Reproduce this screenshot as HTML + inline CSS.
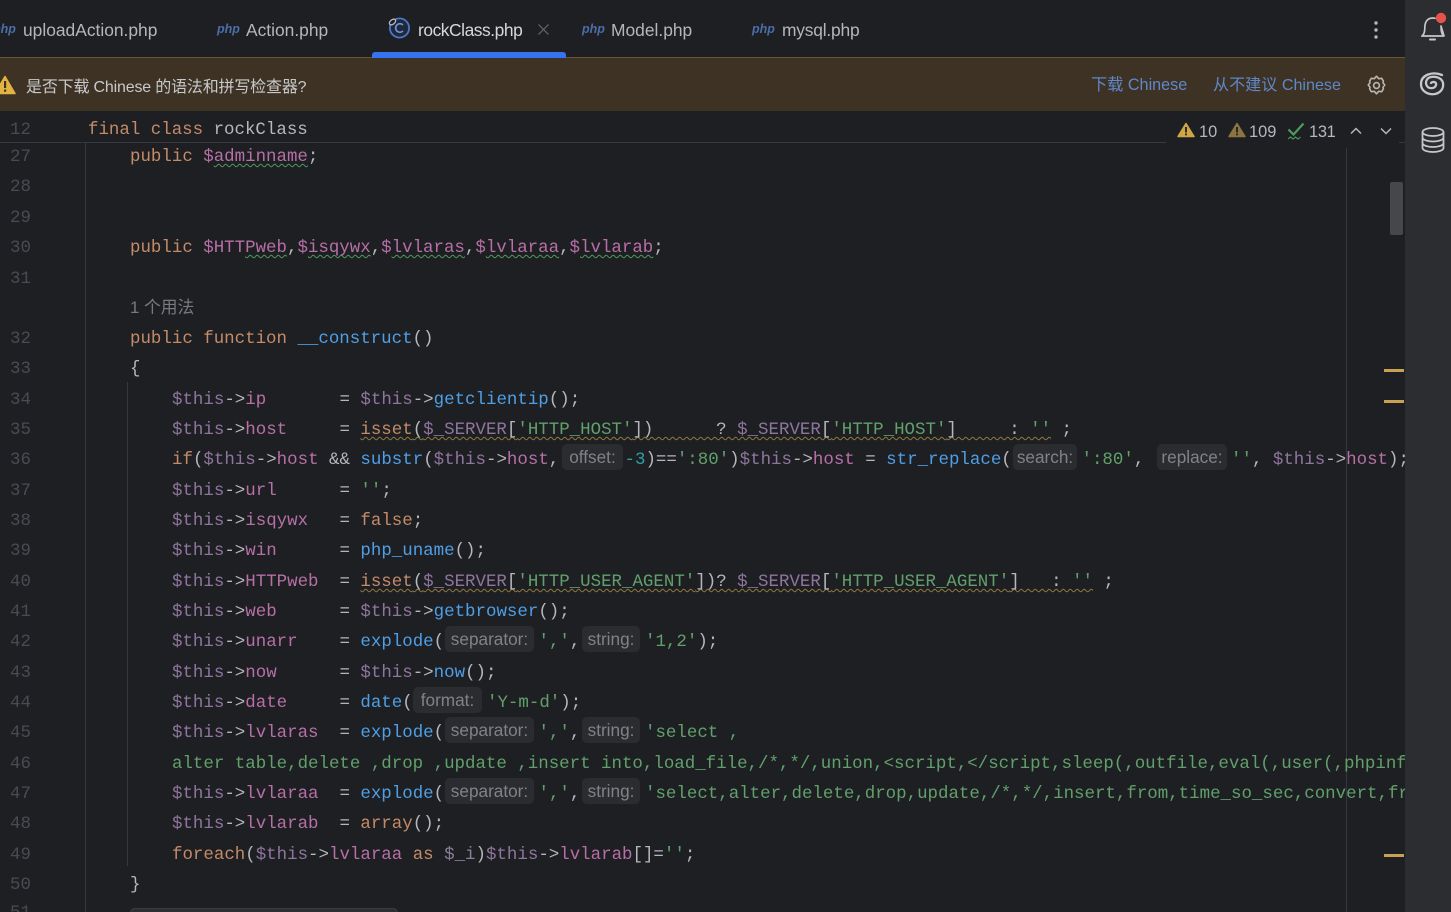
<!DOCTYPE html>
<html><head><meta charset="utf-8"><style>
html,body{margin:0;padding:0;background:#1e1f23}
#root{position:relative;width:1451px;height:912px;overflow:hidden;background:#1e1f23;font-family:"Liberation Sans","Noto Sans CJK SC",sans-serif;filter:blur(.3px)}
.a{position:absolute}
.tab{position:absolute;top:19px;font-size:17.4px;line-height:22px;color:#b4b6bb;white-space:nowrap}
.php{position:absolute;top:22px;font-size:12.5px;line-height:14px;font-style:italic;font-weight:bold;color:#4a6ea8;white-space:nowrap}
#ed{position:absolute;left:0;top:4px;width:1405px;height:908px;overflow:hidden}
.l{position:absolute;left:0;width:1405px;height:30px;line-height:30px;font-family:"Liberation Mono",monospace;font-size:17.45px;white-space:pre;color:#b5b7bd}
.l>span,.l>i{position:absolute;top:0}
.g{left:10px;color:#484b52}
i.h{font-family:"Liberation Sans",sans-serif;font-style:normal;font-size:17.2px;color:#7f8287;background:#2b2c30;border-radius:5px;height:26px;line-height:27px;top:-1px;text-align:center;display:block}
.k{color:#c48b68}.t{color:#8f759e}.v{color:#b76fa6}.f{color:#4f9fe6}.s{color:#61a06b}.n{color:#2a9fa8}.d{color:#8a7f99}
.wg{text-decoration:underline wavy #4f9a5d 1px;text-underline-offset:2px;text-decoration-skip-ink:none}
.wy{text-decoration:underline wavy #8d7a3f 1px;text-underline-offset:2px;text-decoration-skip-ink:none}
b{font-weight:normal}
</style></head><body><div id="root">

<div class="a" style="left:0;top:57px;width:1405px;height:54px;background:#3d3224;border-top:1px solid #66553a;box-sizing:border-box"></div>
<div class="a" style="left:372px;top:52px;width:194px;height:6px;background:#3574f0;border-radius:3px 3px 0 0"></div>

<span class="php" style="left:-7px;">php</span><span class="tab" style="left:23px">uploadAction.php</span>
<span class="php" style="left:217px">php</span><span class="tab" style="left:246px">Action.php</span>
<svg class="a" style="left:388px;top:16px" width="24" height="24" viewBox="0 0 24 24" fill="none"><circle cx="11.5" cy="12" r="9.6" stroke="#4a78c8" stroke-width="1.8" fill="#20283a"/><path d="M15 9a4.300 4.300 0 1 0 0 6" stroke="#6f9be0" stroke-width="1.600"/><ellipse cx="4.500" cy="6" rx="3.600" ry="2.200" transform="rotate(-38 4.500 6)" stroke="#b5b7bd" stroke-width="1.300" fill="#1e1f23"/></svg>
<span class="tab" style="left:418px;color:#d5d7db;letter-spacing:-.45px">rockClass.php</span>
<svg class="a" style="left:537px;top:23px" width="13" height="13" viewBox="0 0 13 13"><path d="M1.500 1.500l10 10M11.500 1.500l-10 10" stroke="#64676d" stroke-width="1.200"/></svg>
<span class="php" style="left:582px">php</span><span class="tab" style="left:611px">Model.php</span>
<span class="php" style="left:752px">php</span><span class="tab" style="left:782px;letter-spacing:-.2px">mysql.php</span>
<svg class="a" style="left:1372px;top:20px" width="8" height="20" viewBox="0 0 8 20" fill="#b5b7bd"><circle cx="4" cy="3" r="1.700"/><circle cx="4" cy="10" r="1.700"/><circle cx="4" cy="17" r="1.700"/></svg>

<svg class="a" style="left:-6px;top:75px" width="22" height="20" viewBox="0 0 22 20"><path d="M11 1.500L21 18.500H1z" fill="#e3b341" stroke="#e3b341" stroke-width="1.500" stroke-linejoin="round"/><rect x="10" y="6" width="2.200" height="7" fill="#3d3224"/><rect x="10" y="14.500" width="2.200" height="2.200" fill="#3d3224"/></svg>
<span class="a" style="left:26px;top:77px;font-size:16px;line-height:21px;color:#c8c9cc;white-space:nowrap;letter-spacing:-.18px">是否下载 Chinese 的语法和拼写检查器?</span>
<span class="a" style="left:1091px;top:75px;font-size:16.2px;line-height:21px;color:#5f88c9;white-space:nowrap">下载 Chinese</span>
<span class="a" style="left:1213px;top:75px;font-size:16.1px;line-height:21px;color:#5f88c9;white-space:nowrap">从不建议 Chinese</span>
<svg class="a" style="left:1366px;top:75px" width="21" height="21" viewBox="0 0 21 21" fill="none" stroke="#b9b6b0" stroke-width="1.600" stroke-linejoin="round"><path d="M10.500 1.200l2.200 2.500 3-.4 1.700 2.900-.4 1.500 1.800 2.300-1.800 2.300.4 1.500-1.700 2.900-3-.4-2.200 2.500-2.200-2.500-3 .4-1.700-2.900.4-1.500-1.800-2.300 1.800-2.300-.4-1.500 1.700-2.900 3 .4z"/><circle cx="10.500" cy="10.500" r="2.900"/></svg>

<div class="a" style="left:1405px;top:0;width:46px;height:912px;background:#2b2d30"></div>
<svg class="a" style="left:1404px;top:0" width="46" height="50" viewBox="0 0 46 50" fill="none" stroke="#c5c7cb" stroke-width="1.700"><path d="M18 36c2-1.500 2.800-3.500 2.800-8 0-6 2.500-10 8-10 .8 0 1.500.1 2.200.3M37 26c.1.700.1 1.400.1 2 0 4.500.8 6.500 2.900 8z" stroke-linejoin="round" stroke-linecap="round"/><path d="M18 36h21" stroke-linecap="round"/><path d="M26 39.500h5" stroke-linecap="round" stroke-width="2"/><circle cx="37" cy="18" r="5.200" fill="#e5534b" stroke="none"/></svg>
<svg class="a" style="left:1410px;top:65px" width="41" height="40" viewBox="0 0 41 40" fill="none" stroke="#c5c7cb" stroke-width="2.300" stroke-linecap="round"><path d="M32 10C22 6 11 10 11 19C11 27 19 30 25 29C30 28 34 24 33 18C32 13 26 11 21 12C16 13 15 18 17 21C19 24 25 24 26 20C27 17 23 16 21 18"/></svg>
<svg class="a" style="left:1420px;top:126px" width="26" height="28" viewBox="0 0 26 28" fill="none" stroke="#c5c7cb" stroke-width="1.800"><ellipse cx="13" cy="6" rx="10.500" ry="4"/><path d="M2.500 6v16c0 2.200 4.700 4 10.500 4s10.500-1.800 10.500-4V6M2.500 11.500c0 2.200 4.700 4 10.500 4s10.500-1.800 10.500-4M2.500 17c0 2.200 4.700 4 10.500 4s10.500-1.800 10.500-4"/></svg>

<div class="a" style="left:85px;top:143px;width:1px;height:769px;background:#35373c"></div>
<div class="a" style="left:127px;top:382px;width:1px;height:484px;background:#35373c"></div>
<div class="a" style="left:1346px;top:148px;width:1px;height:764px;background:#35373c"></div>

<div id="ed">
<div class="l" style="top:111px"><span class="g">12</span><span class="k" style="left:88px">final class <b style="color:#b5b7bd">rockClass</b></span></div>
<div class="l" style="top:138px"><span class="g">27</span><span style="left:130px"><b class="k">public </b><b class="v">$<b class="wg">adminname</b></b>;</span></div>
<div class="l" style="top:168px"><span class="g">28</span></div>
<div class="l" style="top:199px"><span class="g">29</span></div>
<div class="l" style="top:229px"><span class="g">30</span><span style="left:130px"><b class="k">public </b><b class="v">$HTT<b class="wg">Pweb</b></b>,<b class="v">$<b class="wg">isqywx</b></b>,<b class="v">$<b class="wg">lvlaras</b></b>,<b class="v">$<b class="wg">lvlaraa</b></b>,<b class="v">$<b class="wg">lvlarab</b></b>;</span></div>
<div class="l" style="top:260px"><span class="g">31</span></div>
<span class="a" style="left:130px;top:293px;font-size:16.8px;line-height:21px;color:#787a80;white-space:nowrap">1 个用法</span>
<div class="l" style="top:320px"><span class="g">32</span><span style="left:130px"><b class="k">public function </b><b class="f">__construct</b>()</span></div>
<div class="l" style="top:350px"><span class="g">33</span><span style="left:130px">{</span></div>
<div class="l" style="top:381px"><span class="g">34</span><span style="left:172px"><b class="t">$this</b>-&gt;<b class="v">ip</b>       = <b class="t">$this</b>-&gt;<b class="f">getclientip</b>();</span></div>
<div class="l" style="top:411px"><span class="g">35</span><span style="left:172px"><b class="t">$this</b>-&gt;<b class="v">host</b>     = <b class="wy"><b class="k">isset</b>(<b class="t">$_SERVER</b>[<b class="s">'HTTP_HOST'</b>])      ? <b class="t">$_SERVER</b>[<b class="s">'HTTP_HOST'</b>]     : <b class="s">''</b></b> ;</span></div>
<div class="l" style="top:441px"><span class="g">36</span><span style="left:172px"><b class="k">if</b>(<b class="t">$this</b>-&gt;<b class="v">host</b> &amp;&amp; <b class="f">substr</b>(<b class="t">$this</b>-&gt;<b class="v">host</b>,</span><i class="h" style="left:562px;width:61px">offset:</i><span style="left:624.5px"><b class="n">-3</b>)==<b class="s">':80'</b>)<b class="t">$this</b>-&gt;<b class="v">host</b> = <b class="f">str_replace</b>(</span><i class="h" style="left:1013px;width:64px">search:</i><span style="left:1081.5px"><b class="s">':80'</b>,</span><i class="h" style="left:1157px;width:70px">replace:</i><span style="left:1231px"><b class="s">''</b>, <b class="t">$this</b>-&gt;<b class="v">host</b>);</span></div>
<div class="l" style="top:472px"><span class="g">37</span><span style="left:172px"><b class="t">$this</b>-&gt;<b class="v">url</b>      = <b class="s">''</b>;</span></div>
<div class="l" style="top:502px"><span class="g">38</span><span style="left:172px"><b class="t">$this</b>-&gt;<b class="v">isqywx</b>   = <b class="k">false</b>;</span></div>
<div class="l" style="top:532px"><span class="g">39</span><span style="left:172px"><b class="t">$this</b>-&gt;<b class="v">win</b>      = <b class="f">php_uname</b>();</span></div>
<div class="l" style="top:563px"><span class="g">40</span><span style="left:172px"><b class="t">$this</b>-&gt;<b class="v">HTTPweb</b>  = <b class="wy"><b class="k">isset</b>(<b class="t">$_SERVER</b>[<b class="s">'HTTP_USER_AGENT'</b>])? <b class="t">$_SERVER</b>[<b class="s">'HTTP_USER_AGENT'</b>]   : <b class="s">''</b></b> ;</span></div>
<div class="l" style="top:593px"><span class="g">41</span><span style="left:172px"><b class="t">$this</b>-&gt;<b class="v">web</b>      = <b class="t">$this</b>-&gt;<b class="f">getbrowser</b>();</span></div>
<div class="l" style="top:623px"><span class="g">42</span><span style="left:172px"><b class="t">$this</b>-&gt;<b class="v">unarr</b>    = <b class="f">explode</b>(</span><i class="h" style="left:445px;width:89px">separator:</i><span style="left:538.5px"><b class="s">','</b>,</span><i class="h" style="left:582px;width:58px">string:</i><span style="left:645px"><b class="s">'1,2'</b>);</span></div>
<div class="l" style="top:654px"><span class="g">43</span><span style="left:172px"><b class="t">$this</b>-&gt;<b class="v">now</b>      = <b class="t">$this</b>-&gt;<b class="f">now</b>();</span></div>
<div class="l" style="top:684px"><span class="g">44</span><span style="left:172px"><b class="t">$this</b>-&gt;<b class="v">date</b>     = <b class="f">date</b>(</span><i class="h" style="left:413px;width:69px">format:</i><span style="left:487px"><b class="s">'Y-m-d'</b>);</span></div>
<div class="l" style="top:714px"><span class="g">45</span><span style="left:172px"><b class="t">$this</b>-&gt;<b class="v">lvlaras</b>  = <b class="f">explode</b>(</span><i class="h" style="left:445px;width:89px">separator:</i><span style="left:538.5px"><b class="s">','</b>,</span><i class="h" style="left:582px;width:58px">string:</i><span style="left:645px"><b class="s">'select ,</b></span></div>
<div class="l" style="top:745px"><span class="g">46</span><span class="s" style="left:172px">alter table,delete ,drop ,update ,insert into,load_file,/*,*/,union,&lt;script,&lt;/script,sleep(,outfile,eval(,user(,phpinfo()</span></div>
<div class="l" style="top:775px"><span class="g">47</span><span style="left:172px"><b class="t">$this</b>-&gt;<b class="v">lvlaraa</b>  = <b class="f">explode</b>(</span><i class="h" style="left:445px;width:89px">separator:</i><span style="left:538.5px"><b class="s">','</b>,</span><i class="h" style="left:582px;width:58px">string:</i><span class="s" style="left:645px">'select,alter,delete,drop,update,/*,*/,insert,from,time_so_sec,convert,from_unixtime</span></div>
<div class="l" style="top:805px"><span class="g">48</span><span style="left:172px"><b class="t">$this</b>-&gt;<b class="v">lvlarab</b>  = <b class="k">array</b>();</span></div>
<div class="l" style="top:836px"><span class="g">49</span><span style="left:172px"><b class="k">foreach</b>(<b class="t">$this</b>-&gt;<b class="v">lvlaraa</b> <b class="k">as</b> <b class="d">$_i</b>)<b class="t">$this</b>-&gt;<b class="v">lvlarab</b>[]=<b class="s">''</b>;</span></div>
<div class="l" style="top:866px"><span class="g">50</span><span style="left:130px">}</span></div>
<div class="l" style="top:894px"><span class="g">51</span></div>
</div>

<div class="a" style="left:130px;top:908px;width:268px;height:10px;background:#2d2e32;border:1px solid #3c3e43;border-radius:5px;box-sizing:border-box"></div>

<div class="a" style="left:0;top:142px;width:1166px;height:1px;background:#37393e"></div>
<div class="a" style="left:1399px;top:142px;width:6px;height:1px;background:#37393e"></div>

<svg class="a" style="left:1177px;top:122px" width="18" height="16" viewBox="0 0 18 16"><path d="M9 1.500L17 14.500H1z" fill="#d0a545" stroke="#d0a545" stroke-width="1.500" stroke-linejoin="round"/><rect x="8.100" y="5" width="1.800" height="5.500" fill="#1e1f23"/><rect x="8.100" y="11.500" width="1.800" height="1.800" fill="#1e1f23"/></svg>
<span class="a" style="left:1199px;top:122px;font-size:16.4px;line-height:20px;color:#b5b7bd">10</span>
<svg class="a" style="left:1228px;top:122px" width="18" height="16" viewBox="0 0 18 16"><path d="M9 1.500L17 14.500H1z" fill="#8b7440" stroke="#8b7440" stroke-width="1.500" stroke-linejoin="round"/><rect x="8.100" y="5" width="1.800" height="5.500" fill="#1e1f23"/><rect x="8.100" y="11.500" width="1.800" height="1.800" fill="#1e1f23"/></svg>
<span class="a" style="left:1249px;top:122px;font-size:16.4px;line-height:20px;color:#b5b7bd">109</span>
<svg class="a" style="left:1287px;top:122px" width="18" height="20" viewBox="0 0 18 20" fill="none" stroke="#4f9a5d"><path d="M1.500 7.500l5 5L16.500 1.500" stroke-width="2.200"/><path d="M1 17l2.500-2 2.500 2 2.500-2 2.500 2 2.500-2" stroke-width="1.100"/></svg>
<span class="a" style="left:1309px;top:122px;font-size:16.4px;line-height:20px;color:#b5b7bd;letter-spacing:-.3px">131</span>
<svg class="a" style="left:1349px;top:126px" width="14" height="10" viewBox="0 0 14 10" fill="none" stroke="#b5b7bd" stroke-width="1.500"><path d="M2 7.500l5-5 5 5"/></svg>
<svg class="a" style="left:1379px;top:126px" width="14" height="10" viewBox="0 0 14 10" fill="none" stroke="#b5b7bd" stroke-width="1.500"><path d="M2 2.500l5 5 5-5"/></svg>

<div class="a" style="left:1390px;top:182px;width:13px;height:53px;background:#45474b;border-radius:2px"></div>
<div class="a" style="left:1384px;top:369px;width:20px;height:3px;background:#c8a252"></div>
<div class="a" style="left:1384px;top:400px;width:20px;height:3px;background:#c8a252"></div>
<div class="a" style="left:1384px;top:854px;width:20px;height:3px;background:#c8a252"></div>
</div></body></html>
